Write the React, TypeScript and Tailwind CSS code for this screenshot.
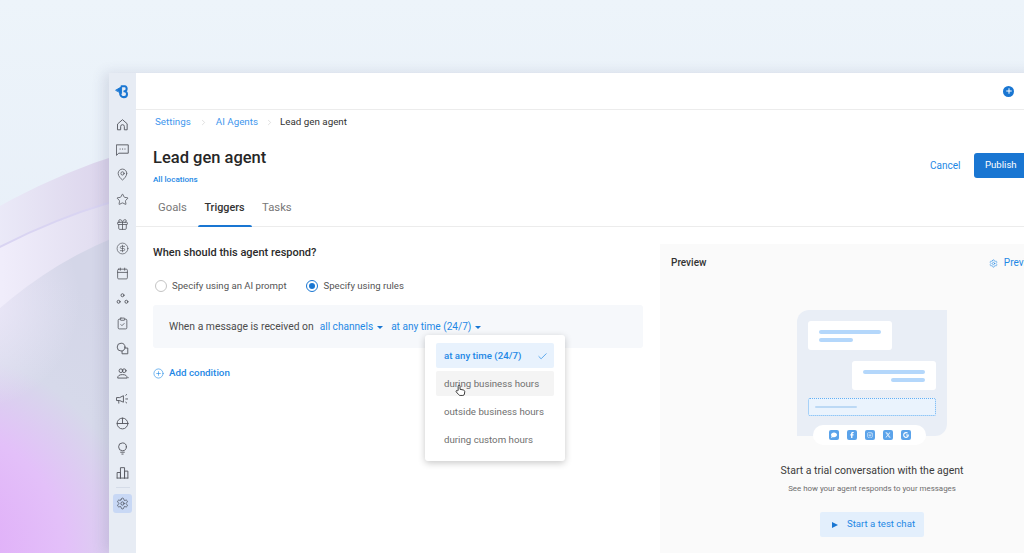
import {
  Calendar,
  Check,
  ChevronRight,
  CircleDollarSign,
  CirclePlus,
  ClipboardCheck,
  Gift,
  MapPin,
  Plus,
  Settings,
  Star,
} from "lucide-react";
import { FaFacebookF, FaInstagram, FaXTwitter, FaComment, FaGoogle } from "react-icons/fa6";

const ic = "w-[13px] h-[13px] text-[#55585f]";

function Glyph({ children }: { children: React.ReactNode }) {
  return (
    <svg viewBox="0 0 14 14" className={ic} fill="none" stroke="currentColor" strokeWidth="1" strokeLinejoin="round" strokeLinecap="round">
      {children}
    </svg>
  );
}

const navIcons = [
  <Glyph><path d="M2 6.2 7 1.8l5 4.4v6.5H9V9.2a2 2 0 0 0-4 0v3.5H2z" /></Glyph>,
  <Glyph>
    <path d="M.8 2h12.4v9H3L.8 13z" />
    <path d="M4.3 6.5h.3M6.9 6.5h.3M9.5 6.5h.3" />
  </Glyph>,
  <MapPin className={ic} strokeWidth={1.5} />,
  <Star className={ic} strokeWidth={1.5} />,
  <Gift className={ic} strokeWidth={1.5} />,
  <CircleDollarSign className={ic} strokeWidth={1.3} />,
  <Calendar className={ic} strokeWidth={1.5} />,
  <Glyph>
    <circle cx="7" cy="3.5" r="1.6" />
    <circle cx="2.8" cy="10.5" r="1.6" />
    <circle cx="11.2" cy="10.5" r="1.6" />
  </Glyph>,
  <ClipboardCheck className={ic} strokeWidth={1.5} />,
  <Glyph>
    <circle cx="5.5" cy="5.5" r="4.2" />
    <path d="M9.5 6.5h3.2v6.2H6.5V9.8" />
  </Glyph>,
  <Glyph>
    <circle cx="5.3" cy="4" r="2" />
    <circle cx="8.8" cy="4" r="2" />
    <path d="M1.8 11.5c0-2.2 2-3.3 5.2-3.3s5 1.1 5 3.3z" />
    <path d="M13 11.5h.2" />
  </Glyph>,
  <Glyph>
    <path d="M1 6h3l4-2v7L4 9.2H1z" />
    <path d="M3 9.5V12M10.5 3.5l1-.8M10.5 7.5h2M10.5 11l1 .8" />
  </Glyph>,
  <Glyph>
    <circle cx="7" cy="7" r="5.8" />
    <path d="M7 1.2V7M1.2 7h11.6" />
  </Glyph>,
  <Glyph>
    <circle cx="7" cy="5.2" r="4.2" />
    <path d="M5 11h4M6.3 13h1.4" />
  </Glyph>,
  <Glyph><path d="M1.2 13V7h3.6v6M4.8 13V1.8h4.4V13M9.2 13V5.5h3.6V13M1.2 13h11.6" /></Glyph>,
];

function Sidebar() {
  return (
    <aside className="w-[27px] shrink-0 bg-[#e7ecf4] flex flex-col items-center pt-[11px]">
      <svg viewBox="0 0 16 16" className="w-[15px] h-[15px] mb-[13px]" fill="none" stroke="#1976d2" strokeWidth="2.2" strokeLinejoin="round" strokeLinecap="round">
        <path d="M1 6.5 7 3v6.8z" fill="#1976d2" strokeWidth="1" />
        <path d="M7 2.4h3.4c2.6 0 2.9 5-.4 5.4 3.6 0 4 6.2-.6 6.2-2.6 0-4-2-4-4.6" />
      </svg>
      {navIcons.map((icon, i) => (
        <div key={i} className="h-[24.9px] w-full flex items-center justify-center shrink-0">
          {icon}
        </div>
      ))}
      <div className="w-[14px] h-px bg-[#d5dce8] mt-[2px] mb-[6px]" />
      <div className="w-[19px] h-[19px] rounded-[3px] bg-[#c8d8f5] flex items-center justify-center">
        <Settings className="w-[13px] h-[13px] text-[#4f5560]" strokeWidth={1.5} />
      </div>
    </aside>
  );
}

function Caret() {
  return <span className="inline-block ml-[4px] border-x-[3px] border-x-transparent border-t-[3px] border-t-[#1976d2]" />;
}

function Radio({ on, label }: { on?: boolean; label: string }) {
  return (
    <div className={on ? "flex items-center gap-[6px]" : "flex items-center gap-[5px]"}>
      <span className={on ? "w-[12px] h-[12px] rounded-full border border-[#1976d2] flex items-center justify-center" : "w-[12px] h-[12px] rounded-full border border-[#c4c4c4]"}>
        {on && <span className="w-[6px] h-[6px] rounded-full bg-[#1976d2]" />}
      </span>
      <span className="text-[#555555] text-[9.6px]">{label}</span>
    </div>
  );
}

function TimeMenu() {
  return (
    <div className="absolute left-[272px] top-[30px] w-[140px] h-[126px] bg-white rounded-[3px] shadow-[0_2px_7px_rgba(0,0,0,0.22)] px-[11px] py-[8px] flex flex-col gap-[3px] text-[#6f6f6f] text-[9.7px]">
      <div className="h-[25px] pt-px rounded-[2px] bg-[#e8f2fd] text-[#1e88e5] font-medium flex items-center justify-between pl-[8px] pr-[6px]">
        at any time (24/7)
        <Check className="w-[11px] h-[11px]" strokeWidth={1.5} />
      </div>
      <div className="h-[25px] pt-px rounded-[2px] bg-[#f4f4f4] flex items-center pl-[8px]">during business hours</div>
      <div className="h-[25px] pt-px flex items-center pl-[8px]">outside business hours</div>
      <div className="h-[25px] pt-px flex items-center pl-[8px]">during custom hours</div>
      {/* cursor */}
      <svg viewBox="0 0 14 16" className="absolute left-[30px] top-[49px] w-[11px] h-[13px]" fill="#fff" stroke="#333" strokeWidth="1.2" strokeLinejoin="round">
        <path d="M4 8V2.5a1.2 1.2 0 0 1 2.4 0V6.5l4 .8c1.3.3 2 1 2 2.2l-.4 3c-.2 1.2-1 1.8-2 1.8H6.5c-.8 0-1.3-.4-1.8-1L1.6 9.8c-.9-1.3.8-2.6 1.8-1.5z" />
      </svg>
    </div>
  );
}

function LeftPane() {
  return (
    <div className="w-[524px] shrink-0 pl-[17px] pt-[18px] text-[10px]">
      <h2 className="text-[11px] leading-[16px] font-medium text-[#2b2b2b]">When should this agent respond?</h2>
      <div className="flex gap-[19px] mt-[18px] ml-[2px] leading-[14px]">
        <Radio label="Specify using an AI prompt" />
        <Radio on label="Specify using rules" />
      </div>
      <div className="relative mt-[12px] w-[490px] h-[43px] pt-px bg-[#f6f8fb] rounded-[3px] flex items-center pl-[16px] text-[#4c4c4c]">
        <span className="text-[10.35px]">When a message is received on</span>
        <span className="text-[#1e88e5] text-[10.1px] ml-[6px]">all channels</span>
        <Caret />
        <span className="text-[#1e88e5] text-[10.1px] ml-[8px]">at any time (24/7)</span>
        <Caret />
        <TimeMenu />
      </div>
      <div className="flex items-center gap-[5px] mt-[18px] ml-px text-[9.8px] text-[#1e88e5] font-medium">
        <CirclePlus className="w-[11px] h-[11px] -ml-px" strokeWidth={1.3} />
        Add condition
      </div>
    </div>
  );
}

const socials = [FaComment, FaFacebookF, FaInstagram, FaXTwitter, FaGoogle];

function Illustration() {
  return (
    <div className="relative w-[150px] h-[126px] bg-[#e9eef6] rounded-tl-[12px] rounded-br-[12px] px-[11px] pt-[11px]">
      <div className="w-[84px] h-[29px] bg-white rounded-[3px] flex flex-col justify-center gap-[4px] pl-[11px]">
        <div className="w-[62px] h-[4px] rounded-full bg-[#b4d7fb]" />
        <div className="w-[34px] h-[4px] rounded-full bg-[#b4d7fb]" />
      </div>
      <div className="w-[84px] h-[29px] bg-white rounded-[3px] flex flex-col justify-center items-end gap-[4px] pr-[11px] mt-[11px] ml-[44px]">
        <div className="w-[62px] h-[4px] rounded-full bg-[#b4d7fb]" />
        <div className="w-[34px] h-[4px] rounded-full bg-[#b4d7fb]" />
      </div>
      <div className="w-[128px] h-[18px] bg-[#eaf3fd] border border-dotted border-[#64b0f4] rounded-[2px] mt-[8px] flex items-center pl-[6px]">
        <div className="w-[42px] h-[2px] rounded-full bg-[#bcd9f5]" />
      </div>
      <div className="absolute left-[16px] top-[115px] w-[113px] h-[20px] bg-white rounded-full flex items-center justify-center gap-[8px]">
        {socials.map((Icon, i) => (
          <div key={i} className="w-[10px] h-[10px] rounded-[2px] bg-[#5ba3ea] flex items-center justify-center">
            <Icon className="w-[6px] h-[6px] text-white" />
          </div>
        ))}
      </div>
    </div>
  );
}

function PreviewPane() {
  return (
    <section className="w-[428px] shrink-0 mt-[17px] bg-[#fafafa] px-[11px] pt-[12px] flex flex-col">
      <div className="flex justify-between items-center text-[10px] leading-[14px]">
        <span className="font-medium text-[#333333]">Preview</span>
        <span className="flex items-center gap-[6px] text-[#1e88e5]">
          <Settings className="w-[9px] h-[9px]" strokeWidth={1.5} />
          Preview settings
        </span>
      </div>
      <div className="ml-[126px] mt-[40px]">
        <Illustration />
      </div>
      <div className="w-[342px] ml-[30px] flex flex-col items-center">
        <p className="text-[10.5px] leading-[16px] text-[#3c3c3c] mt-[27px]">Start a trial conversation with the agent</p>
        <p className="text-[7.9px] leading-[12px] text-[#6d6d6d] mt-[4px]">See how your agent responds to your messages</p>
        <div className="mt-[17px] w-[104px] h-[25px] bg-[#e3effc] rounded-[2px] flex items-center pl-[12px] gap-[9px] text-[9.6px] text-[#1e88e5]">
          <span className="border-y-[3.5px] border-y-transparent border-l-[6px] border-l-[#1976d2]" />
          Start a test chat
        </div>
      </div>
    </section>
  );
}

export default function App() {
  return (
    <div
      className="relative w-[1024px] h-[553px] overflow-hidden bg-[linear-gradient(180deg,#edf4fa_0%,#e6eef8_60%,#dfe6f3_100%)]"
      style={{ fontFamily: "Roboto, sans-serif" }}
    >
      {/* page backdrop */}
      <div className="absolute left-[-304px] top-[128px] w-[1200px] h-[1200px] rounded-full bg-[linear-gradient(90deg,#ebeaf8_25%,#dcd5ec_34%)]" />
      <div className="absolute left-[-323px] top-[178px] w-[1200px] h-[1200px] rounded-full border-[2px] border-[#d9d4f2] bg-[linear-gradient(90deg,#f0edfb_27%,#e0dcef_36%)]" />
      <div className="absolute left-[-135px] top-[208px] w-[800px] h-[800px] rounded-full bg-[radial-gradient(circle_at_105px_92px,#efeafb_0px,rgba(239,234,251,0)_110px),radial-gradient(circle_at_75px_345px,#dfa6f8_0px,#e3c0f9_125px,#d6d9ea_200px,#d4d6e8_300px)]" />

      <div className="relative flex h-full pl-[109px] pt-[73px]">
        <div className="flex w-[979px] shrink-0 shadow-[-5px_0_12px_rgba(70,70,110,0.14)]">
          <Sidebar />
          <main className="w-[952px] bg-white flex flex-col">
            <header className="h-[37px] shrink-0 border-b border-[#ececec] flex items-center justify-end pr-[74px]">
              <span className="w-[11px] h-[11px] rounded-full bg-[#1976d2] flex items-center justify-center">
                <Plus className="w-[8px] h-[8px] text-white" strokeWidth={3} />
              </span>
            </header>
            <nav className="flex items-center pl-[19px] mt-[5px] text-[9.8px] leading-[14px] text-[#3f97ee]">
              Settings
              <ChevronRight className="w-[9px] h-[9px] mx-[8px] text-[#c9c9c9]" strokeWidth={1.5} />
              AI Agents
              <ChevronRight className="w-[9px] h-[9px] mx-[6.5px] text-[#c9c9c9]" strokeWidth={1.5} />
              <span className="text-[#333333]">Lead gen agent</span>
            </nav>
            <div className="flex items-start justify-between pl-[17px] pr-[54px] mt-[19px]">
              <div>
                <h1 className="text-[16.5px] leading-[20px] font-medium text-[#262626]">Lead gen agent</h1>
                <a className="block text-[8.1px] leading-[10px] font-medium text-[#1e88e5] mt-[6px]">All locations</a>
              </div>
              <div className="flex items-center gap-[14px] mt-[5px] text-[10px]">
                <span className="text-[#1e88e5] w-[30px] shrink-0">Cancel</span>
                <span className="w-[60px] h-[25px] shrink-0 rounded-[3px] bg-[#1976d2] text-white text-[9.6px] flex items-center pl-[11px]">Publish</span>
              </div>
            </div>
            <div className="flex gap-[17.5px] pl-[22px] mt-[9px] h-[34px] border-b border-[#ececec] text-[11.3px] text-[#777777] shrink-0">
              <span className="pt-[7px]">Goals</span>
              <span className="pt-[7px] text-[10.8px] font-medium text-[#333333] relative">
                Triggers
                <span className="absolute left-[-6px] right-[-7px] bottom-[-1px] h-[2px] rounded-t bg-[#1976d2]" />
              </span>
              <span className="pt-[7px]">Tasks</span>
            </div>
            <div className="flex flex-1 min-h-0">
              <LeftPane />
              <PreviewPane />
            </div>
          </main>
        </div>
      </div>
    </div>
  );
}
